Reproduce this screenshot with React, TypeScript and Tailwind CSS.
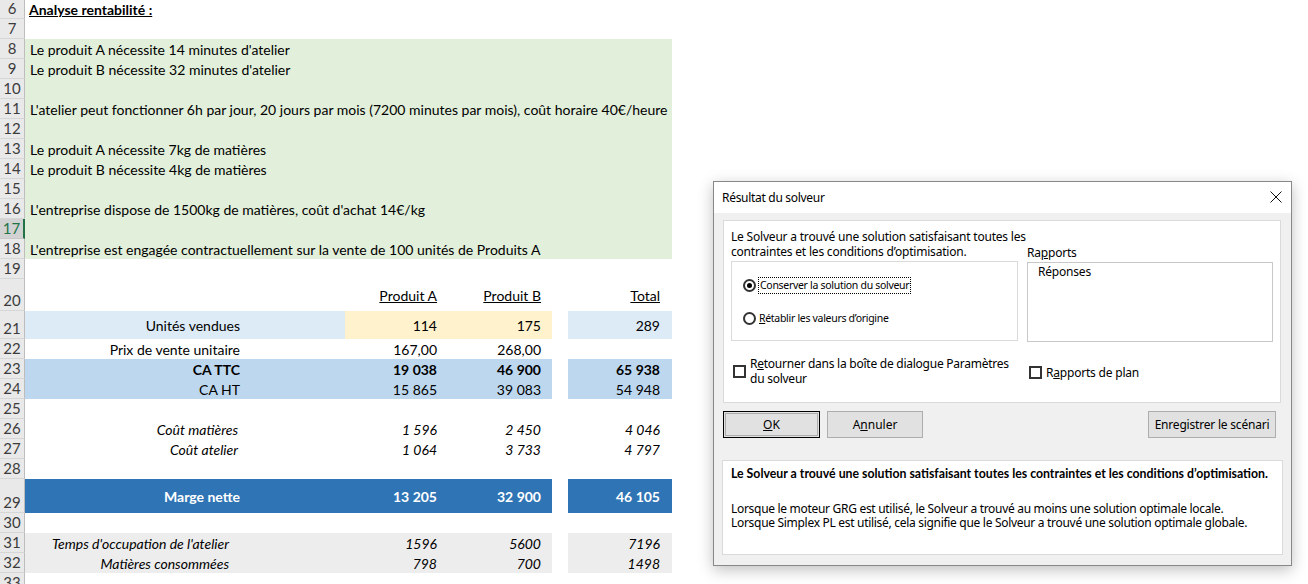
import React from 'react';

// Excel sheet with the Solver result dialog on top

type RowProps = {
  n: number;
  h?: string;
  sel?: boolean;
  children?: React.ReactNode;
};

const Row: React.FC<RowProps> = ({ n, h = 'h-[20px]', sel, children }) => (
  <div className={`flex ${h}`}>
    <div
      className={
        sel
          ? 'w-[25px] shrink-0 flex items-end justify-center pb-[1px] bg-[#d2d2d2] text-[#217346] border-r-2 border-[#217346] border-b border-b-[#c8c8c8] text-[15px] leading-[18px]'
          : 'w-[25px] shrink-0 flex items-end justify-center pb-[1px] bg-[#e9e9e9] text-[#3c3c3c] border-r border-[#bdbdbd] border-b border-b-[#d6d6d6] text-[15px] leading-[18px]'
      }
    >
      {n}
    </div>
    <div className="flex">{children}</div>
  </div>
);

const Green: React.FC<{ children?: React.ReactNode }> = ({ children }) => (
  <div className="w-[647px] bg-[#e2efda] flex items-center pl-[5px] whitespace-nowrap">{children}</div>
);

type TRow = {
  label: string;
  a: string;
  b: string;
  t: string;
  lab: string;
  ab: string;
  gap: string;
  tb: string;
  text?: string;
  pr?: string;
};

const TableRow: React.FC<TRow> = ({ label, a, b, t, lab, ab, gap, tb, text = '', pr = 'pr-[105px]' }) => (
  <>
    <div className={`w-[320px] flex items-center justify-end ${pr} ${lab} ${text}`}>{label}</div>
    <div className={`w-[103px] flex items-center justify-end pr-[11px] ${ab} ${text}`}>{a}</div>
    <div className={`w-[104px] flex items-center justify-end pr-[11px] ${ab} ${text}`}>{b}</div>
    <div className={`w-[16px] ${gap}`}></div>
    <div className={`w-[104px] flex items-center justify-end pr-[12px] ${tb} ${text}`}>{t}</div>
  </>
);

const Check: React.FC = () => (
  <div className="w-[13px] h-[13px] border-2 border-[#333] bg-white shrink-0"></div>
);

const App: React.FC = () => {
  return (
    <div className="relative w-[1308px] h-[584px] bg-white overflow-hidden font-['Lato',sans-serif] text-[14px] text-black">
      {/* sheet */}
      <div className="flex flex-col">
        <Row n={6} h="h-[19px]">
          <div className="pl-[4px] flex items-center font-bold underline">Analyse rentabilité :</div>
        </Row>
        <Row n={7} />
        <Row n={8}><Green>Le produit A nécessite 14 minutes d'atelier</Green></Row>
        <Row n={9}><Green>Le produit B nécessite 32 minutes d'atelier</Green></Row>
        <Row n={10}><Green /></Row>
        <Row n={11}>
          <Green>L'atelier peut fonctionner 6h par jour, 20 jours par mois (7200 minutes par mois), coût horaire 40€/heure</Green>
        </Row>
        <Row n={12}><Green /></Row>
        <Row n={13}><Green>Le produit A nécessite 7kg de matières</Green></Row>
        <Row n={14}><Green>Le produit B nécessite 4kg de matières</Green></Row>
        <Row n={15}><Green /></Row>
        <Row n={16}><Green>L'entreprise dispose de 1500kg de matières, coût d'achat 14€/kg</Green></Row>
        <Row n={17} sel><Green /></Row>
        <Row n={18}><Green>L'entreprise est engagée contractuellement sur la vente de 100 unités de Produits A</Green></Row>
        <Row n={19} />
        <Row n={20} h="h-[32px]">
          <div className="w-[320px]"></div>
          <div className="w-[103px] flex items-center justify-end pr-[11px] underline">Produit A</div>
          <div className="w-[104px] flex items-center justify-end pr-[11px] underline">Produit B</div>
          <div className="w-[16px]"></div>
          <div className="w-[104px] flex items-center justify-end pr-[12px] underline">Total</div>
        </Row>
        <Row n={21} h="h-[28px]">
          <TableRow label="Unités vendues" a="114" b="175" t="289" lab="bg-[#ddebf7]" ab="bg-[#fff2cc]" gap="bg-white" tb="bg-[#ddebf7]" />
        </Row>
        <Row n={22}>
          <TableRow label="Prix de vente unitaire" a="167,00" b="268,00" t="" lab="" ab="" gap="" tb="" />
        </Row>
        <Row n={23}>
          <TableRow label="CA TTC" a="19 038" b="46 900" t="65 938" lab="bg-[#bdd7ee]" ab="bg-[#bdd7ee]" gap="bg-white" tb="bg-[#bdd7ee]" text="font-bold" />
        </Row>
        <Row n={24}>
          <TableRow label="CA HT" a="15 865" b="39 083" t="54 948" lab="bg-[#bdd7ee]" ab="bg-[#bdd7ee]" gap="bg-white" tb="bg-[#bdd7ee]" />
        </Row>
        <Row n={25} />
        <Row n={26}>
          <TableRow label="Coût matières" a="1 596" b="2 450" t="4 046" lab="" ab="" gap="" tb="" text="italic" pr="pr-[107px]" />
        </Row>
        <Row n={27}>
          <TableRow label="Coût atelier" a="1 064" b="3 733" t="4 797" lab="" ab="" gap="" tb="" text="italic" pr="pr-[107px]" />
        </Row>
        <Row n={28} />
        <Row n={29} h="h-[34px]">
          <TableRow label="Marge nette" a="13 205" b="32 900" t="46 105" lab="bg-[#2f75b5]" ab="bg-[#2f75b5]" gap="bg-white" tb="bg-[#2f75b5]" text="font-bold text-white" />
        </Row>
        <Row n={30} />
        <Row n={31}>
          <TableRow label="Temps d'occupation de l'atelier" a="1596" b="5600" t="7196" lab="bg-[#ededed]" ab="bg-[#ededed]" gap="bg-white" tb="bg-[#ededed]" text="italic" pr="pr-[116px]" />
        </Row>
        <Row n={32}>
          <TableRow label="Matières consommées" a="798" b="700" t="1498" lab="bg-[#ededed]" ab="bg-[#ededed]" gap="bg-white" tb="bg-[#ededed]" text="italic" pr="pr-[116px]" />
        </Row>
        <Row n={33} />
      </div>

      {/* Solver result dialog */}
      <div className="absolute left-[713px] top-[181px] w-[579px] h-[385px] border border-[#888] bg-[#f0f0f0] shadow-[0_4px_14px_rgba(0,0,0,0.25)] flex flex-col font-['Noto_Sans',sans-serif] text-[12px] text-black">
        <div className="h-[31px] bg-white flex items-center justify-between pl-[8px] pr-[9px] shrink-0">
          <span className="tracking-[-0.3px]">Résultat du solveur</span>
          <svg width="12" height="12" viewBox="0 0 12 12" className="mb-[1px]">
            <path d="M0.5 0.5 L11.5 11.5 M11.5 0.5 L0.5 11.5" stroke="#111" strokeWidth="1" fill="none" />
          </svg>
        </div>

        <div className="flex flex-col px-[9px] pt-[7px]">
          {/* main panel */}
          <div className="h-[183px] w-[558px] bg-white border border-[#dadada] flex flex-col px-[7px] pt-[8px]">
            <div className="flex gap-[9px]">
              <div className="w-[287px] flex flex-col">
                <div className="leading-[15px] tracking-[-0.2px] whitespace-nowrap">
                  Le Solveur a trouvé une solution satisfaisant toutes les
                  <br />
                  contraintes et les conditions d’optimisation.
                </div>
                <div className="mt-[2px] h-[80px] border border-[#dadada] flex flex-col pl-[11px] pt-[15px] gap-[17px] text-[10.5px] tracking-[-0.3px]">
                  <div className="flex items-center gap-[2px]">
                    <div className="w-[13px] h-[13px] rounded-full border-2 border-[#333] flex items-center justify-center">
                      <div className="w-[5px] h-[5px] rounded-full bg-black"></div>
                    </div>
                    <span className="border border-dotted border-black px-[1px] leading-[15px]">Conserver la solution du solveur</span>
                  </div>
                  <div className="flex items-center gap-[3px]">
                    <div className="w-[13px] h-[13px] rounded-full border-2 border-[#333]"></div>
                    <span className="leading-[15px]"><span className="underline">R</span>établir les valeurs d’origine</span>
                  </div>
                </div>
              </div>
              <div className="w-[248px] flex flex-col pt-[16px]">
                <div className="leading-[15px] tracking-[-0.2px]">Ra<span className="underline">p</span>ports</div>
                <div className="mt-[2px] h-[80px] border border-[#c8c8c8] pl-[10px] pt-[1px] leading-[15px] tracking-[-0.2px]">Réponses</div>
              </div>
            </div>
            <div className="flex mt-[14px]">
              <div className="w-[296px] flex items-center gap-[4px] pl-[2px]">
                <Check />
                <span className="leading-[15px] tracking-[-0.25px]">
                  R<span className="underline">e</span>tourner dans la boîte de dialogue Paramètres
                  <br />
                  du solveur
                </span>
              </div>
              <div className="flex items-center gap-[4px] pl-[2px] mt-[3px]">
                <Check />
                <span className="tracking-[-0.2px]">R<span className="underline">a</span>pports de plan</span>
              </div>
            </div>
          </div>

          {/* buttons */}
          <div className="flex mt-[8px] h-[27px]">
            <div className="w-[97px] border border-black bg-[#e1e1e1] flex items-center justify-center">
              <span className="w-[93px] h-[23px] border border-[#adadad] flex items-center justify-center">
                <span className="underline">O</span>K
              </span>
            </div>
            <div className="ml-[7px] w-[96px] border border-[#adadad] bg-[#e1e1e1] flex items-center justify-center">
              A<span className="underline">n</span>nuler
            </div>
            <div className="ml-auto mr-[6px] w-[128px] border border-[#adadad] bg-[#e1e1e1] flex items-center justify-center tracking-[-0.2px]">
              Enregistrer le scénari
            </div>
          </div>

          {/* message panel */}
          <div className="mt-[22px] ml-[-1px] w-[561px] h-[95px] bg-white border border-[#dadada] flex flex-col pl-[8px] pt-[5px]">
            <div className="font-['Lato',sans-serif] font-bold text-[12.3px] leading-[16px] whitespace-nowrap">
              Le Solveur a trouvé une solution satisfaisant toutes les contraintes et les conditions d’optimisation.
            </div>
            <div className="mt-[20px] leading-[14px] tracking-[-0.3px] whitespace-nowrap">
              Lorsque le moteur GRG est utilisé, le Solveur a trouvé au moins une solution optimale locale.
              <br />
              Lorsque Simplex PL est utilisé, cela signifie que le Solveur a trouvé une solution optimale globale.
            </div>
          </div>
        </div>
      </div>
    </div>
  );
};

export default App;
